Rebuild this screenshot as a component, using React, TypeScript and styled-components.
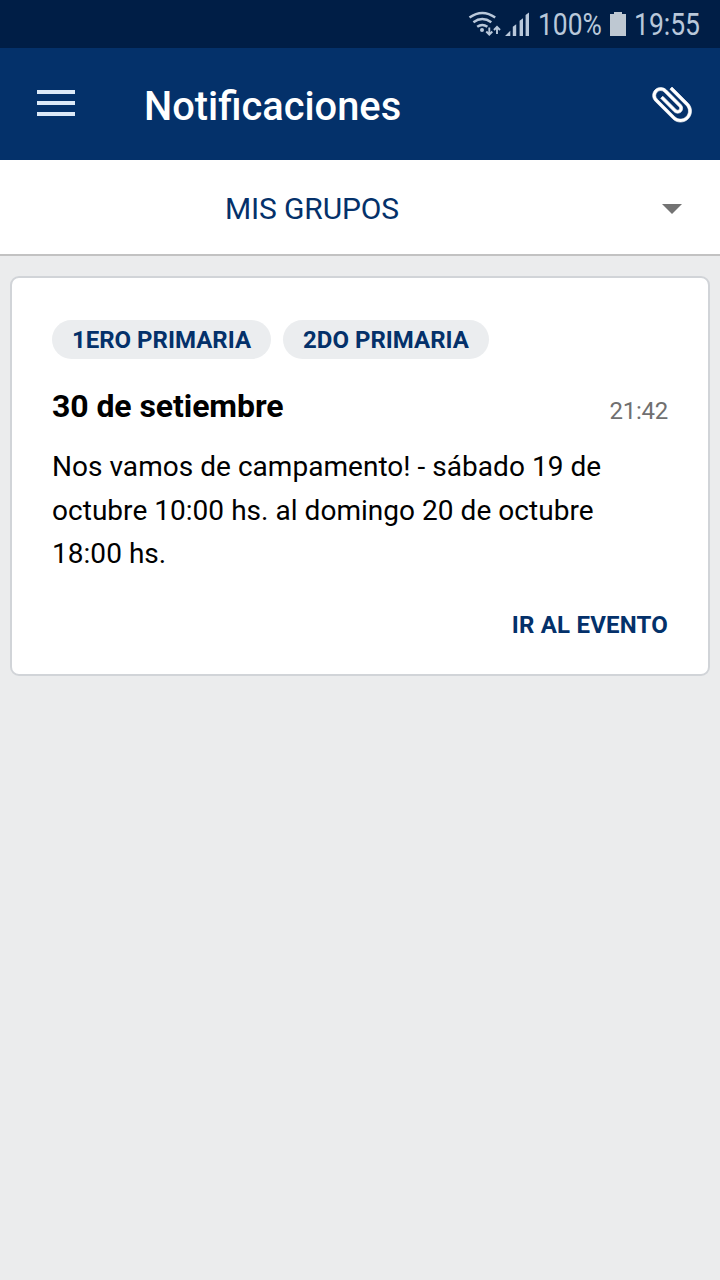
import React from 'react';
import styled, { createGlobalStyle } from 'styled-components';

const GlobalStyle = createGlobalStyle`
  * { box-sizing: border-box; }
  body { margin: 0; background: #ebeced; font-family: Roboto, "Liberation Sans", sans-serif; }
`;

const Screen = styled.main`
  display: flex;
  flex-direction: column;
  width: 720px;
  height: 1280px;
  background: #ebeced;
  overflow: hidden;
`;

const StatusBar = styled.div`
  display: flex;
  justify-content: flex-end;
  height: 48px;
  padding-right: 19px;
  background: #001e46;
  color: #b9c8da;
`;

const StatusIcons = styled.svg`
  display: block;
  flex: none;
`;

const StatusSlot = styled.div<{ $width: number; $gap: number }>`
  width: ${(p) => p.$width}px;
  margin-left: ${(p) => p.$gap}px;
  height: 48px;
`;

const StatusText = styled.span<{ $scale: number }>`
  display: block;
  width: max-content;
  font-size: 31px;
  line-height: 49px;
  transform: scaleX(${(p) => p.$scale});
  transform-origin: left;
`;

const AppBar = styled.header`
  display: flex;
  align-items: center;
  height: 112px;
  padding: 0 24px 0 37px;
  background: #04316a;
  color: #fff;
`;

const MenuButton = styled.button`
  display: flex;
  flex-direction: column;
  gap: 7px;
  width: 38px;
  margin: 0 69px 2px 0;
  padding: 0;
  border: 0;
  background: none;
`;

const MenuLine = styled.span`
  height: 4px;
  background: #dce9f8;
`;

const Title = styled.h1`
  flex: 1;
  margin: 6px 0 0;
  font-size: 39.8px;
  line-height: 48px;
  font-weight: 500;
`;

const AttachIcon = styled.svg`
  display: block;
  margin-bottom: 1px;
  transform: rotate(-45deg);
`;

const GroupSelect = styled.div`
  display: flex;
  align-items: center;
  height: 96px;
  padding-right: 38px;
  background: #fff;
  border-bottom: 2px solid #c2c2c2;
`;

const GroupLabel = styled.span`
  flex: 1;
  padding: 3px 0 0 225px;
  color: #04316a;
  font-size: 30px;
  line-height: 40px;
  letter-spacing: -0.15px;
`;

const Caret = styled.span`
  border: 10px solid transparent;
  border-top-color: #737373;
  border-bottom: 0;
  margin-top: 3px;
`;

const Card = styled.article`
  display: flex;
  flex-direction: column;
  height: 400px;
  margin: 20px 10px 0;
  padding: 42px 40px 0;
  background: #fff;
  border: 2px solid #d1d4d8;
  border-radius: 9px;
`;

const Tags = styled.div`
  display: flex;
  gap: 12px;
`;

const Tag = styled.span<{ $width: number }>`
  width: ${(p) => p.$width}px;
  height: 39px;
  border-radius: 20px;
  background: #ebedef;
  color: #04316a;
  font-size: 24px;
  font-weight: 700;
  line-height: 40px;
  text-align: center;
  white-space: nowrap;
`;

const CardHead = styled.div`
  display: flex;
  justify-content: space-between;
  align-items: baseline;
  height: 48px;
  margin-top: 23px;
`;

const DateText = styled.h2`
  margin: 0;
  font-size: 32px;
  line-height: 48px;
  font-weight: 700;
  letter-spacing: -0.08px;
  color: #000;
`;

const Time = styled.time`
  position: relative;
  top: 2px;
  font-size: 24px;
  letter-spacing: -0.25px;
  color: #707070;
`;

const Message = styled.p`
  margin: 15px 0 0;
  font-size: 28px;
  line-height: 43.5px;
  letter-spacing: 0.035px;
  color: #000;
`;

const EventLink = styled.button`
  align-self: flex-end;
  margin-top: 31px;
  padding: 0;
  border: 0;
  background: none;
  color: #04316a;
  font: 700 24px/36px Roboto, "Liberation Sans", sans-serif;
  letter-spacing: 0.2px;
`;

export default function App() {
  return (
    <Screen>
      <GlobalStyle />
      <StatusBar>
        <StatusIcons width="64" height="48" viewBox="466 0 64 48" fill="none" stroke="currentColor">
          <path d="M469.5 17.5Q482.3 8.5 495.2 17.5M473.4 22.2Q482.3 16 491.3 22.2M477.2 26.8Q482.3 23.2 487.4 26.8" strokeWidth="2.5" />
          <circle cx="482" cy="30" r="2" fill="currentColor" stroke="none" />
          <path d="M489.3 27.5v7M486.3 31.5l3 3.2 3-3.2M497 34v-7M494 30l3-3.2 3 3.2" strokeWidth="1.9" />
          <path d="M505 36h5.3v-5.3zM512.8 36h3.4V24.3l-3.4 2.4zM519.6 36h3.4V18.3l-3.4 2.4zM525.6 36h3.4V12.5l-3.4 2.4z" fill="currentColor" stroke="none" />
        </StatusIcons>
        <StatusSlot $width={64} $gap={8}><StatusText $scale={0.852}>100%</StatusText></StatusSlot>
        <StatusIcons width="32" height="48" viewBox="602 0 32 48">
          <path d="M610 14h4v-2h8v2h4v22h-16z" fill="#bec8d2" />
        </StatusIcons>
        <StatusSlot $width={67} $gap={0}><StatusText $scale={0.855}>19:55</StatusText></StatusSlot>
      </StatusBar>
      <AppBar>
        <MenuButton aria-label="Menú"><MenuLine /><MenuLine /><MenuLine /></MenuButton>
        <Title>Notificaciones</Title>
        <AttachIcon width="48" height="48" viewBox="0 0 24 24" fill="#fff" stroke="#fff" strokeWidth=".3">
          <path d="M16.5 6v11.5c0 2.21-1.79 4-4 4s-4-1.79-4-4V5c0-1.38 1.12-2.5 2.5-2.5s2.5 1.12 2.5 2.5v10.5c0 .55-.45 1-1 1s-1-.45-1-1V6H10v9.5c0 1.38 1.12 2.5 2.5 2.5s2.5-1.12 2.5-2.5V5c0-2.21-1.79-4-4-4S7 2.79 7 5v12.5c0 3.04 2.46 5.5 5.5 5.5s5.5-2.46 5.5-5.5V6h-1.5z" />
        </AttachIcon>
      </AppBar>
      <GroupSelect>
        <GroupLabel>MIS GRUPOS</GroupLabel>
        <Caret />
      </GroupSelect>
      <Card>
        <Tags>
          <Tag $width={219}>1ERO PRIMARIA</Tag>
          <Tag $width={206}>2DO PRIMARIA</Tag>
        </Tags>
        <CardHead>
          <DateText>30 de setiembre</DateText>
          <Time>21:42</Time>
        </CardHead>
        <Message>
          Nos vamos de campamento! - sábado 19 de<br />
          octubre 10:00 hs. al domingo 20 de octubre<br />
          18:00 hs.
        </Message>
        <EventLink>IR AL EVENTO</EventLink>
      </Card>
    </Screen>
  );
}
